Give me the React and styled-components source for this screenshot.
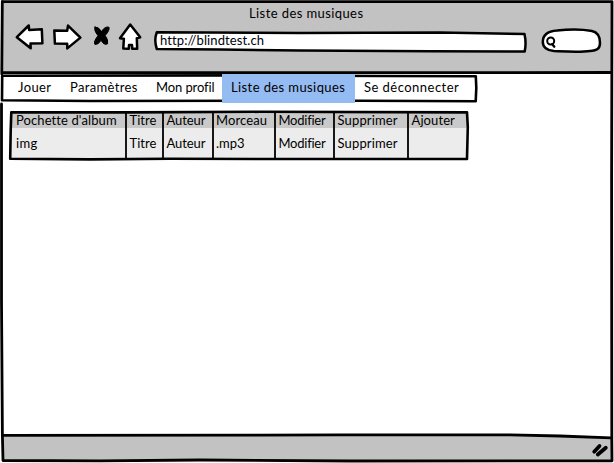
import React from "react";
import styled, { createGlobalStyle } from "styled-components";

const GlobalStyle = createGlobalStyle`
  *, *::before, *::after { box-sizing: border-box; }
  html, body { margin: 0; height: 463px; overflow: hidden; background: #fff; }
  body { font-family: Lato, "Open Sans", sans-serif; font-size: 13px; color: #000; }
`;

const Window = styled.div`
  position: relative;
  display: flex;
  flex-direction: column;
  width: 614px;
  height: 463px;
  padding: 1px 2px 2px;
  background: #fff;
`;

const Ink = styled.svg`
  position: absolute;
  left: 0;
  top: 0;
  overflow: visible;
  pointer-events: none;
  fill: none;
  stroke: #000;
  stroke-width: 2.8;
  stroke-linejoin: round;
  stroke-linecap: round;
`;

const Text = styled.span`
  letter-spacing: ${(p) => p.$track ?? 0.5}px;
  line-height: 16px;
  white-space: pre;
  font-variant-ligatures: none;
`;

const Header = styled.header`
  display: flex;
  flex-direction: column;
  height: 73px;
  background: #c2c2c2;
`;

const Title = styled.h1`
  margin: 4px 0 0;
  padding-left: 247px;
  height: 16px;
  font-size: 13px;
  font-weight: 400;
  line-height: 16px;
`;

const Toolbar = styled.div`
  display: flex;
  align-items: flex-start;
  height: 34px;
  padding-left: 12px;
`;

const Tools = styled.div`
  width: 138px;
  height: 34px;
  flex: none;
`;

const ToolIcons = styled.svg`
  display: block;
  fill: #fff;
  stroke: #000;
  stroke-width: 2.5;
  stroke-linejoin: round;
  stroke-linecap: round;
`;

const AddressBar = styled.div`
  position: relative;
  width: 376px;
  height: 24px;
  margin-top: 7px;
  padding: 4px 0 0 8px;
  line-height: 16px;
  color: #00000c;
`;

const AddressText = styled(Text)`
  position: relative;
`;

const Search = styled.div`
  position: relative;
  width: 62px;
  height: 26px;
  margin: 7px 0 0 13px;
`;

const Menu = styled.nav`
  position: relative;
  display: flex;
  width: 476px;
  height: 29px;
  margin-left: -1px;
`;

const MenuItem = styled.a`
  position: relative;
  width: ${(p) => p.$width}px;
  padding: 5px 0 0 ${(p) => p.$inset ?? 9}px;
  background: ${(p) => (p.$active ? "#94bbf2" : "transparent")};
  line-height: 16px;
  color: #000;
`;

const Content = styled.main`
  flex: 1;
  padding: 8px 0 0 8px;
`;

const Table = styled.div`
  position: relative;
  width: 458px;
  height: 49px;
  padding: 1px;
`;

const Row = styled.div`
  display: grid;
  grid-template-columns: 115px 37px 49.5px 62.5px 59px 74px 59px;
  height: ${(p) => (p.$head ? 16 : 31)}px;
  background: ${(p) => (p.$head ? "#c9c9c9" : "#ececec")};
`;

const Cell = styled.div`
  padding: ${(p) => (p.$head ? 0 : 7)}px 0 0 ${(p) => (p.$first ? 5 : 3.5)}px;
  line-height: 16px;
`;

const Footer = styled.footer`
  position: relative;
  height: 26px;
  background: #c2c2c2;
  clip-path: polygon(0 0, 530px 0, 100% 3px, 100% 100%, 0 100%);
`;

const menu = [
  { label: "Jouer", width: 60, inset: 17, track: 0.4 },
  { label: "Paramètres", width: 86, track: 0.35 },
  { label: "Mon profil", width: 75, track: -0.1 },
  { label: "Liste des musiques", width: 133, active: true, track: 0.4 },
  { label: "Se déconnecter", width: 121, track: 0.47 },
];

const rows = [
  {
    head: true,
    cells: ["Pochette d'album", "Titre", "Auteur", "Morceau", "Modifier", "Supprimer", "Ajouter"],
  },
  { cells: ["img", "Titre", "Auteur", ".mp3", "Modifier", "Supprimer", ""] },
];

const tracks = {
  "Pochette d'album": 0.1,
  Titre: 0.05,
  Auteur: -0.1,
  Morceau: 0.1,
  Modifier: -0.25,
  Supprimer: 0.15,
  Ajouter: 0.1,
  ".mp3": 0,
  img: 0.3,
};

export default function App() {
  return (
    <>
      <GlobalStyle />
      <Window>
        <Header>
          <Title>
            <Text $track={0.41}>Liste des musiques</Text>
          </Title>
          <Toolbar>
            <Tools>
              <ToolIcons width="138" height="34" viewBox="14 21 138 34">
                <path d="M16.8 37.2 L28.7 25.5 L29.2 30 L41.8 29.2 L42.4 43.2 L30.5 43.6 L30.7 48.2 Z" />
                <path d="M54.3 30.5 L67.2 30.8 L68 25.6 L80.4 37.6 L67.3 48.4 L67.2 43.7 L54.9 43.6 Z" />
                <path
                  fill="#000"
                  strokeWidth="1"
                  d="M95 27 Q98.5 26.5 101.5 31.5 Q105 26 109 27.2 Q110 30 105.2 35.5 Q108.5 40 107.6 43.8 Q104 45.8 101 40.2 Q98.5 44.8 95 44.5 Q93 42 98 35.7 Q93.5 30 95 27 Z"
                />
                <path d="M130.2 24.5 L140.2 37.2 L136.8 38.2 L137.2 48.7 L132.2 48.7 L132 45 L129 45 L128.8 48.7 L123.3 48.5 L123.9 38.7 L120 38.2 Z" />
              </ToolIcons>
            </Tools>
            <AddressBar>
              <Ink width="376" height="24" viewBox="152 28 376 24">
                <path
                  fill="#fff"
                  strokeWidth="2.5"
                  d="M156.8 32.2 L300 33 L440 32.4 L524.5 34 Q526.5 43 524.7 51.5 L430 51.2 L300 50.6 L220 49.5 L156.8 49 Q153.8 40 156.8 32.2 Z"
                />
              </Ink>
              <AddressText $track={0.1}>http://blindtest.ch</AddressText>
            </AddressBar>
            <Search>
              <Ink width="62" height="26" viewBox="541 28 62 26">
                <path
                  fill="#fff"
                  strokeWidth="2.5"
                  d="M542.8 42 C542.8 34 549 31 557 30.5 C568 29.3 583 29.3 592 31 C599 32.5 600 38 600 43 C600 49 597 50.5 590 51 C579 52.5 565 51.5 554 51 C547 50.5 542.8 47 542.8 42 Z"
                />
                <circle cx="550.7" cy="41" r="3.5" strokeWidth="2" />
                <path strokeWidth="2.3" d="M552.3 44.2 L554.3 46.7" />
              </Ink>
            </Search>
          </Toolbar>
        </Header>
        <Menu>
          <Ink width="476" height="29" viewBox="1 74 476 29">
            <path
              fill="#fff"
              strokeWidth="2.6"
              d="M2.2 75.8 L240 75.4 L380 76 L475.8 76.3 L476.3 88 L475.7 101.2 L360 100.7 L90 101 L2 100.3 Z"
            />
          </Ink>
          {menu.map((m) => (
            <MenuItem key={m.label} $width={m.width} $inset={m.inset} $active={m.active}>
              <Text $track={m.track}>{m.label}</Text>
            </MenuItem>
          ))}
        </Menu>
        <Content>
          <Table>
            {rows.map((row, r) => (
              <Row key={r} $head={row.head}>
                {row.cells.map((c, i) => (
                  <Cell key={i} $head={row.head} $first={i === 0}>
                    <Text $track={tracks[c]}>{c}</Text>
                  </Cell>
                ))}
              </Row>
            ))}
            <Ink width="458" height="49" viewBox="10 111 458 49">
              <path
                strokeWidth="2.6"
                d="M11.3 112.3 L130 112.4 L260 111.8 L467 112.4 L467.8 127 L467 159 L300 159 L170 158.8 L90 159.4 L10.2 158.7 L10.7 130 Z"
              />
              <path
                strokeWidth="1.8"
                strokeLinecap="butt"
                d="M126 112V158 M163 112V158 M213 112V158 M275 112V158 M334 112V158 M408 112V158"
              />
            </Ink>
          </Table>
        </Content>
        <Footer>
          <Ink width="610" height="26" viewBox="2 435 610 26">
            <path strokeWidth="3.8" d="M594.2 451.7 L599.5 446 M597.8 454.5 L605.8 447.7" />
          </Ink>
        </Footer>
        <Ink width="614" height="463" viewBox="0 0 614 463">
          <path d="M2.3 1.6 L612 1.6 L611.6 180 L611.8 440 L612 460.8 L350 461 L200 460 L100 460.9 L3 460.5 L2.4 435 L1.5 300 L1.5 104" />
          <path d="M2.3 1.6 L1.8 70 L1.8 74" />
          <path d="M3 72.7 L611 72.5" />
          <path d="M3 435.4 L260 435.2 L340 434.8 L510 434.8 L560 436 L611 437.8" />
        </Ink>
      </Window>
    </>
  );
}
